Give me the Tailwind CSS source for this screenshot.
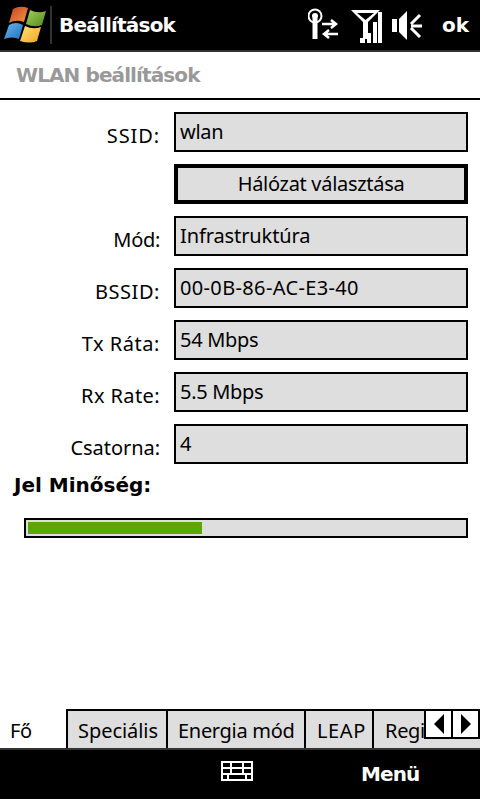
<!DOCTYPE html>
<html lang="hu">
<head>
    <meta charset="UTF-8">
    <meta name="viewport" content="width=device-width, initial-scale=1.0">
    <title>WLAN beállítások</title>
    <script src="https://cdn.jsdelivr.net/npm/@tailwindcss/browser@4"></script>
</head>
<body class="bg-white text-black font-['Noto_Sans',sans-serif] overflow-hidden">
    <div class="w-[480px] h-[799px] flex flex-col">
        <!-- top bar -->
        <header class="h-[52px] shrink-0 bg-black border-b-2 border-[#333] flex items-center text-white">
            <svg class="ml-[4px]" width="42" height="40" viewBox="0 0 42 40">
                <defs>
                    <linearGradient id="red" x1="0" y1="0" x2="1" y2="1"><stop offset="0" stop-color="#c9401c"/><stop offset="1" stop-color="#f09a4a"/></linearGradient>
                    <linearGradient id="green" x1="0" y1="0" x2="1" y2="1"><stop offset="0" stop-color="#a8d05a"/><stop offset="1" stop-color="#4f8a1e"/></linearGradient>
                    <linearGradient id="blue" x1="0" y1="0" x2="1" y2="1"><stop offset="0" stop-color="#6bb8ea"/><stop offset="1" stop-color="#1f6fc0"/></linearGradient>
                    <linearGradient id="yellow" x1="0" y1="0" x2="1" y2="1"><stop offset="0" stop-color="#fde27a"/><stop offset="1" stop-color="#f0a51e"/></linearGradient>
                </defs>
                <path d="M9 4 Q16 0 24 3 L20 17 Q12 14 5 18 Z" fill="url(#red)"/>
                <path d="M26 5 Q34 9 42 6 L38 20 Q30 23 22 19 Z" fill="url(#green)"/>
                <path d="M5 20 Q12 16 19 20 L15 34 Q8 31 0 34 Z" fill="url(#blue)"/>
                <path d="M21 21 Q29 25 37 22 L33 36 Q26 39 16 36 Z" fill="url(#yellow)"/>
            </svg>
            <div class="w-[2px] h-[38px] ml-[4px] bg-[#333]"></div>
            <span class="ml-[7px] font-['DejaVu_Sans',sans-serif] text-[20px] leading-none font-bold tracking-[-0.8px] mt-[-1px]">Beállítások</span>
            <div class="ml-auto flex items-center">
                <svg width="36" height="36" viewBox="0 0 36 36" fill="none" stroke="#fff">
                    <circle cx="7" cy="9" r="6.5" stroke-width="2"/>
                    <circle cx="7" cy="9" r="3" fill="#fff" stroke="none"/>
                    <path d="M7 11V32" stroke-width="5"/>
                    <path d="M14 17H28M23 13L28 17L23 21M30 27H16M21 23L16 27L21 31" stroke-width="2.5"/>
                </svg>
                <svg class="ml-[6px]" width="36" height="36" viewBox="0 0 36 36" fill="#fff">
                    <path d="M1 3H30L18 15V32H13V15ZM7 6L15.500 13L24 6Z" fill-rule="evenodd"/>
                    <rect x="10" y="31" width="5" height="5"/>
                    <rect x="17" y="26" width="4" height="10"/>
                    <rect x="23" y="15" width="4" height="21"/>
                    <rect x="28" y="5" width="4" height="31"/>
                </svg>
                <svg class="ml-[6px]" width="34" height="36" viewBox="0 0 34 36" fill="#fff" stroke="none">
                    <rect x="0" y="12" width="5" height="13"/>
                    <path d="M7 12L15 4V33L7 25Z"/>
                    <path d="M19 17L28 8M19 19H30M19 21L28 30" stroke="#fff" stroke-width="3" fill="none"/>
                </svg>
                <span class="w-[54px] pl-[16px] font-['DejaVu_Sans',sans-serif] text-[20px] leading-none font-bold mt-[-1px]">ok</span>
            </div>
        </header>

        <!-- page title -->
        <div class="h-[48px] shrink-0 border-b-2 border-black flex items-center pl-[16px]">
            <h1 class="font-['DejaVu_Sans',sans-serif] text-[20px] font-bold text-[#999] leading-none tracking-[-0.9px]">WLAN beállítások</h1>
        </div>

        <!-- form -->
        <main class="flex-1 flex flex-col">
            <div class="pt-[12px] pl-[14px] pr-[12px] flex flex-col gap-[12px] text-[20px] tracking-[-0.3px]">
                <div class="flex h-[40px]">
                    <label class="w-[146px] mr-[14px] text-right self-end leading-[26px] mb-[3px] tracking-[0.9px]">SSID:</label>
                    <div class="flex-1 bg-[#dedede] border-2 border-black px-[4px] leading-[36px]">wlan</div>
                </div>
                <div class="flex h-[40px]">
                    <div class="w-[146px] mr-[14px]"></div>
                    <button class="flex-1 bg-[#dedede] border-4 border-black leading-[30px] text-center">Hálózat választása</button>
                </div>
                <div class="flex h-[40px]">
                    <label class="w-[146px] mr-[14px] text-right self-end leading-[26px] mb-[3px]">Mód:</label>
                    <div class="flex-1 bg-[#dedede] border-2 border-black px-[4px] leading-[36px] tracking-[-0.1px]">Infrastruktúra</div>
                </div>
                <div class="flex h-[40px]">
                    <label class="w-[146px] mr-[14px] text-right self-end leading-[26px] mb-[3px] tracking-[0.55px]">BSSID:</label>
                    <div class="flex-1 bg-[#dedede] border-2 border-black px-[4px] leading-[36px] tracking-[0.35px]">00-0B-86-AC-E3-40</div>
                </div>
                <div class="flex h-[40px]">
                    <label class="w-[146px] mr-[14px] text-right self-end leading-[26px] mb-[3px] tracking-[0.55px]">Tx Ráta:</label>
                    <div class="flex-1 bg-[#dedede] border-2 border-black px-[4px] leading-[36px]">54 Mbps</div>
                </div>
                <div class="flex h-[40px]">
                    <label class="w-[146px] mr-[14px] text-right self-end leading-[26px] mb-[3px] tracking-[0.4px]">Rx Rate:</label>
                    <div class="flex-1 bg-[#dedede] border-2 border-black px-[4px] leading-[36px]">5.5 Mbps</div>
                </div>
                <div class="flex h-[40px]">
                    <label class="w-[146px] mr-[14px] text-right self-end leading-[26px] mb-[3px] tracking-[-0.05px]">Csatorna:</label>
                    <div class="flex-1 bg-[#dedede] border-2 border-black px-[4px] leading-[36px]">4</div>
                </div>
            </div>
            <div class="mt-[8px] pl-[14px] font-['DejaVu_Sans',sans-serif] text-[20px] font-bold leading-[26px]">Jel Minőség:</div>
            <div class="mt-[20px] ml-[24px] mr-[12px] h-[20px] border-2 border-black bg-[#dedede] p-[2px]">
                <div class="h-full bg-[#5ba700]" style="width: 40%"></div>
            </div>
        </main>

        <!-- tabs -->
        <nav class="h-[39px] shrink-0 relative flex items-stretch text-[20px] tracking-[-0.3px] leading-[39px] overflow-hidden">
            <div class="w-[66px] pl-[10px] pt-[2px]">Fő</div>
            <div class="w-[102px] border-2 border-b-0 border-black bg-[#dedede] pl-[10px] whitespace-nowrap tracking-[-0.05px]">Speciális</div>
            <div class="w-[138px] border-t-2 border-r-2 border-black bg-[#dedede] pl-[10px] whitespace-nowrap">Energia mód</div>
            <div class="w-[68px] border-t-2 border-r-2 border-black bg-[#dedede] pl-[11px] whitespace-nowrap tracking-[0.6px]">LEAP</div>
            <div class="flex-1 border-t-2 border-black bg-[#dedede] pl-[11px] whitespace-nowrap overflow-hidden">Regi</div>
            <div class="absolute right-0 top-0 w-[56px] h-[30px] bg-black flex gap-[2px] p-[2px]">
                <div class="flex-1 bg-white flex items-center justify-center">
                    <svg width="12" height="20" viewBox="0 0 12 20"><path d="M11 0V20L1 10Z" fill="#000"/></svg>
                </div>
                <div class="flex-1 bg-white flex items-center justify-center">
                    <svg width="12" height="20" viewBox="0 0 12 20"><path d="M1 0V20L11 10Z" fill="#000"/></svg>
                </div>
            </div>
        </nav>

        <!-- bottom bar -->
        <footer class="h-[51px] shrink-0 bg-black border-t-2 border-[#333] relative flex items-center text-white">
            <svg class="ml-[221px] mt-[-7px]" width="32" height="20" viewBox="0 0 32 20" fill="none" stroke="#fff" stroke-width="2">
                <path d="M1 1H31V19H1ZM1 7H31M1 13H31M10 1V13M22 1V13M7 13V19M25 13V19"/>
            </svg>
            <span class="ml-[108px] font-['DejaVu_Sans',sans-serif] text-[20px] leading-none font-bold tracking-[-0.9px] mt-[-1px]">Menü</span>
        </footer>
    </div>
</body>
</html>
